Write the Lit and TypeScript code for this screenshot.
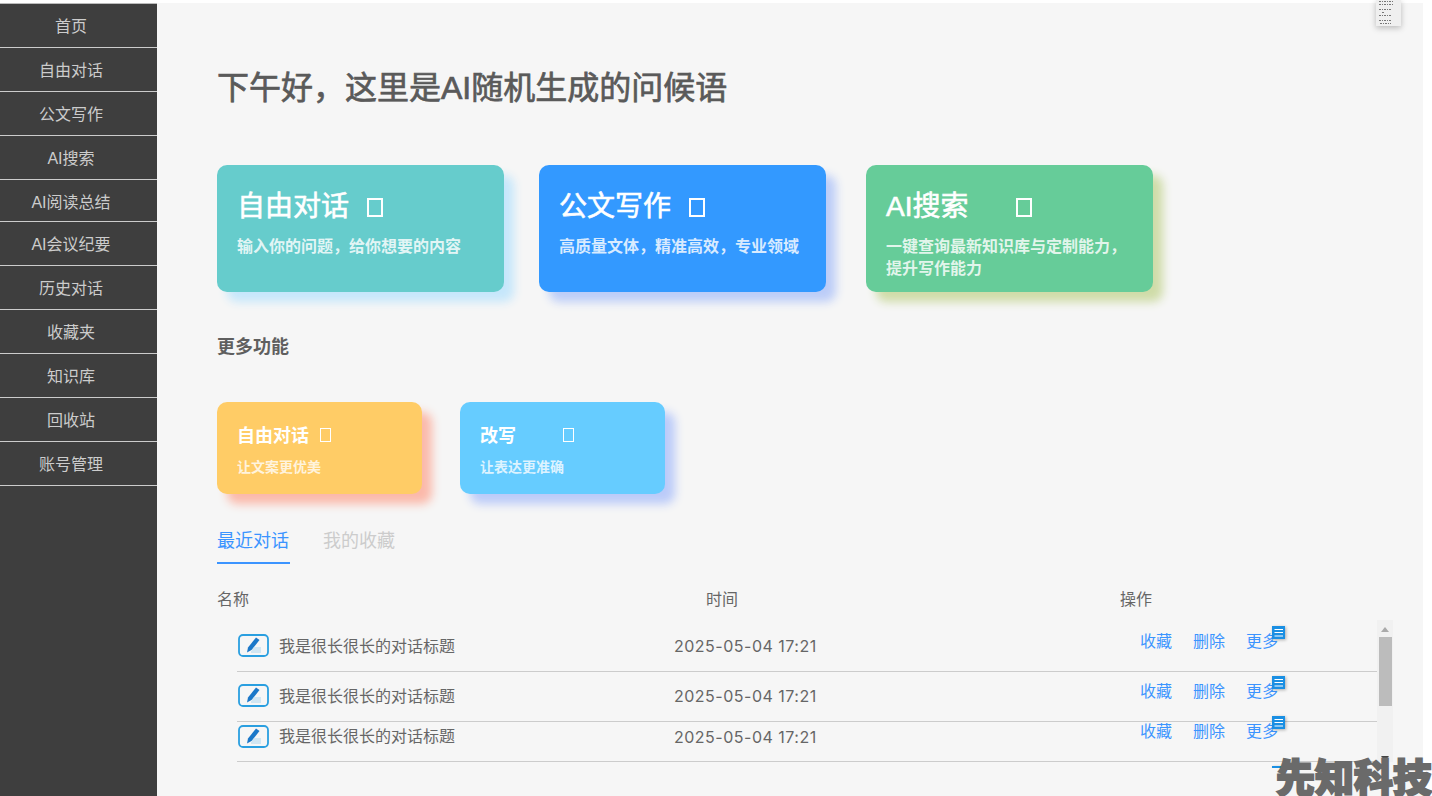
import { LitElement, html, css } from "lit";
import { customElement } from "lit/decorators.js";

const NAV = ["首页","自由对话","公文写作","AI搜索","AI阅读总结","AI会议纪要","历史对话","收藏夹","知识库","回收站","账号管理"];
const ROWS = ["r1","r2","r3"];

@customElement("app-root")
export class AppRoot extends LitElement {
  static styles = css`
    :host { display: block; position: relative; width: 1432px; height: 796px; overflow: hidden; background: #fff;
      font-family: "Liberation Sans", "Noto Sans CJK SC", sans-serif; font-size: 16px; color: #666; }
    * { box-sizing: border-box; }
    .page { display: flex; height: 796px; padding-top: 3px; }
    .side { width: 157px; flex: none; background: #3e3e3e; border-top: 1px solid #bbb; }
    .nav { height: 44px; display: flex; align-items: center; justify-content: center; color: #ccc; border-bottom: 1px solid #ccc; padding: 0 15px 2px 0; }
    .nav.short { height: 42px; padding-bottom: 0; }
    .main { width: 1266px; flex: none; background: #f6f6f6; padding: 65px 30px 0 60px; }
    h1 { margin: 0; font-size: 32px; line-height: 40px; font-weight: 400; color: #5a5a5a; -webkit-text-stroke: .7px #5a5a5a; }
    .cards { display: flex; margin-top: 57px; gap: 35px; }
    .card { width: 287px; height: 127px; border-radius: 10px; padding: 20px 20px 0; color: #fff; }
    .card.third { margin-left: 5px; }
    .t { display: flex; align-items: center; height: 40px; padding-bottom: 2px; font-size: 28px; font-weight: 400; -webkit-text-stroke: .6px #fff; }
    .t span { width: 130px; flex: none; }
    .box { display: block; width: 16px; height: 19px; border: 2px solid #fff; margin-top: 7px; }
    .s { margin-top: 11px; font-size: 16px; line-height: 22px; font-weight: 700; color: rgba(255,255,255,.82); }
    .teal { background: #66cccc; box-shadow: 10px 10px 10px #c6e7fb; }
    .blue { background: #3399ff; box-shadow: 10px 10px 10px #bccdf8; }
    .green { background: #66cc99; box-shadow: 10px 10px 10px #cfdca8; }
    .orange { background: #ffcc66; box-shadow: 10px 10px 10px #fbb9aa; }
    .sky { background: #66ccff; box-shadow: 10px 10px 10px #bbcbf9; }
    h2 { margin: 43px 0 0; font-size: 18px; line-height: 24px; font-weight: 700; color: #5f5f5f; }
    .small-cards { display: flex; gap: 38px; margin-top: 43px; }
    .sc { width: 205px; height: 92px; border-radius: 10px; padding: 20px 20px 0; color: #fff; }
    .st { display: flex; align-items: center; height: 26px; padding-bottom: 2px; font-size: 18px; font-weight: 700; }
    .st span { width: 83px; flex: none; }
    .sbox { display: block; width: 11px; height: 14px; border: 1.5px solid #fff; margin-top: 2px; }
    .ss { margin-top: 9px; font-size: 14px; line-height: 20px; font-weight: 700; color: rgba(255,255,255,.78); }
    .tabs { display: flex; margin-top: 34px; gap: 33px; font-size: 18px; }
    .tab { line-height: 24px; padding: 1px 1px 9px 0; border-bottom: 2px solid transparent; color: #ccc; }
    .tab.on { color: #3b94ff; border-bottom-color: #3b94ff; }
    .head { display: grid; grid-template-columns: 489px 414px 1fr; margin-top: 24px; line-height: 24px; }
    .table { display: flex; margin-top: 8px; height: 148px; overflow: hidden; }
    .list { width: 1160px; padding: 2px 0 0 20px; }
    .row { display: grid; grid-template-columns: 437px 466px 1fr; align-items: center; height: 50px; border-bottom: 1px solid #ccc; }
    .row.r3 { height: 40px; padding-bottom: 10px; }
    .row.next { border-bottom: 0; }
    .name { display: flex; align-items: center; gap: 10px; padding: 0 0 4px 1px; }
    .ico { display: block; width: 31px; height: 23px; flex: none; margin-top: 2px; }
    .time { font-family: Inter, sans-serif; font-size: 16px; letter-spacing: .5px; padding-bottom: 1px; }
    .acts { display: flex; gap: 21px; padding-bottom: 10px; color: #3b94ff; line-height: 20px; }
    .acts.empty { padding-left: 106px; height: 30px; }
    .more { position: relative; }
    .acts.empty .more { width: 32px; height: 20px; }
    .badge { position: absolute; left: 26px; top: -6px; width: 13px; height: 13px; background: #1a8fe3; box-shadow: 1px 1px 3px rgba(0,0,0,.3); }
    .badge svg { display: block; }
    .bar { width: 16px; flex: none; height: 142px; background: #f1f1f1; display: flex; flex-direction: column; align-items: center; }
    .up { margin-top: 7px; width: 0; height: 0; border: 4px solid transparent; border-top: 0; border-bottom: 5px solid #aaa; }
    .thumb { width: 13px; height: 69px; margin-top: 5px; background: #bcbcbc; margin-left: 1px; }
    .down { margin-top: auto; margin-bottom: 1px; width: 0; height: 0; border: 4px solid transparent; border-bottom: 0; border-top: 5px solid #444; }
    .mini { position: absolute; left: 1376px; top: 0; width: 25px; height: 26px; background: #efefef; box-shadow: 0 2px 6px rgba(0,0,0,.25); }
    .mini svg { display: block; }
    .wm { position: absolute; left: 1276px; top: 754px; font-size: 39px; line-height: 50px; font-weight: 900; color: #6a6a6a; white-space: nowrap;
      -webkit-text-stroke: 2px #6a6a6a; }
  `;

  icon() {
    return html`<svg class="ico" viewBox="0 0 31 23" fill="none">
      <rect x="1" y="1" width="29" height="21" rx="4" stroke="#2a9fe0" stroke-width="1.8"/>
      <path d="M9 18.500l1-5 8-10 3.500 2.500-8 10z" fill="#1b78c9"/>
      <path d="M15 14h8M14 16h9M13 18h10" stroke="#9ccfef" stroke-width=".8"/>
    </svg>`;
  }

  badge() {
    return html`<span class="badge"><svg width="13" height="13" viewBox="0 0 13 13"><path d="M2.500 3.500h8.500M2.500 6.500h8.500M2.500 10h8.500" stroke="#fff" stroke-width="1"/></svg></span>`;
  }

  render() {
    return html`
      <div class="page">
        <nav class="side">
          ${NAV.map((n, i) => html`<div class="nav ${i === 4 ? "short" : ""}">${n}</div>`)}
        </nav>
        <main class="main">
          <h1>下午好，这里是AI随机生成的问候语</h1>
          <div class="cards">
            <div class="card teal"><div class="t"><span>自由对话</span><i class="box"></i></div><div class="s">输入你的问题，给你想要的内容</div></div>
            <div class="card blue"><div class="t"><span>公文写作</span><i class="box"></i></div><div class="s">高质量文体，精准高效，专业领域</div></div>
            <div class="card green third"><div class="t"><span>AI搜索</span><i class="box"></i></div><div class="s">一键查询最新知识库与定制能力，提升写作能力</div></div>
          </div>
          <h2>更多功能</h2>
          <div class="small-cards">
            <div class="sc orange"><div class="st"><span>自由对话</span><i class="sbox"></i></div><div class="ss">让文案更优美</div></div>
            <div class="sc sky"><div class="st"><span>改写</span><i class="sbox"></i></div><div class="ss">让表达更准确</div></div>
          </div>
          <div class="tabs"><div class="tab on">最近对话</div><div class="tab">我的收藏</div></div>
          <div class="head"><span>名称</span><span>时间</span><span>操作</span></div>
          <div class="table">
            <div class="list">
              ${ROWS.map((r) => html`<div class="row ${r}">
                <div class="name">${this.icon()}<span>我是很长很长的对话标题</span></div>
                <div class="time">2025-05-04 17:21</div>
                <div class="acts"><span>收藏</span><span>删除</span><span class="more">更多${this.badge()}</span></div>
              </div>`)}
              <div class="row next"><div></div><div></div><div class="acts empty"><span class="more">${this.badge()}</span></div></div>
            </div>
            <div class="bar"><i class="up"></i><i class="thumb"></i><i class="down"></i></div>
          </div>
        </main>
      </div>
      <div class="mini"><svg width="25" height="26" viewBox="0 0 25 26"><path d="M3 1.500h14M3 4.500h14M3 9.500h12M6 12.500h2M3 15.500h12M3 20.500h13M4 23.500h11" stroke="#777" stroke-width="1" stroke-dasharray="2 1 1 1"/></svg></div>
      <div class="wm">先知科技</div>
    `;
  }
}
